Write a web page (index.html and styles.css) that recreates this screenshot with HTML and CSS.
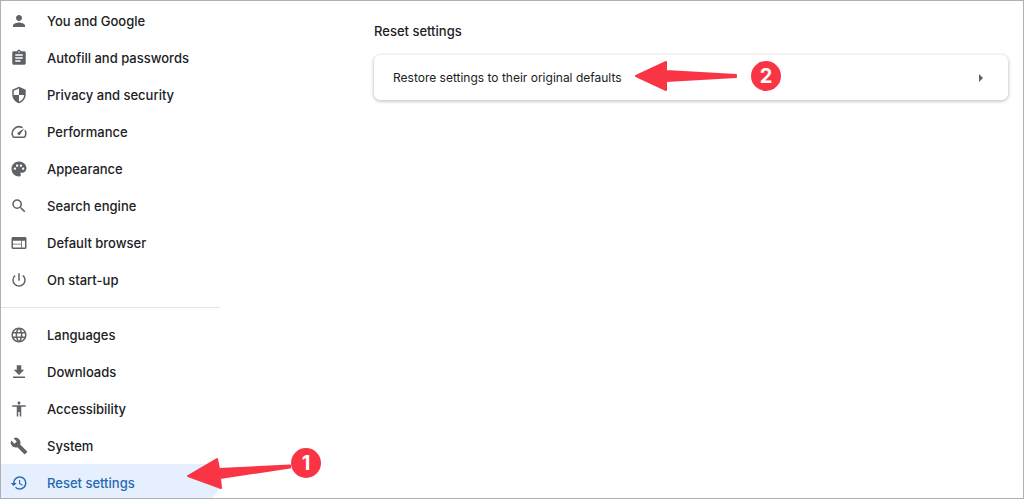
FILE: index.html
```html
<!DOCTYPE html>
<html lang="en">

<head>
    <meta charset="UTF-8" />
    <meta name="viewport" content="width=device-width, initial-scale=1.0" />
    <title>Settings</title>
    <link rel="stylesheet" href="styles.css">
</head>

<body>
    <div class="settings-container">
        <nav class="sidebar">
            <a class="menu-item" href="#people">
                <svg class="icon" viewBox="0 0 24 24"><path d="M12 12c2.21 0 4-1.79 4-4s-1.79-4-4-4-4 1.79-4 4 1.79 4 4 4zm0 2c-2.67 0-8 1.34-8 4v2h16v-2c0-2.66-5.33-4-8-4z" /></svg>
                <span>You and Google</span>
            </a>
            <a class="menu-item" href="#autofill">
                <svg class="icon" viewBox="0 0 24 24"><path d="M19 3h-4.18C14.4 1.84 13.3 1 12 1s-2.4.84-2.82 2H5c-1.1 0-2 .9-2 2v14c0 1.1.9 2 2 2h14c1.1 0 2-.9 2-2V5c0-1.1-.9-2-2-2zm-7 0c.55 0 1 .45 1 1s-.45 1-1 1-1-.45-1-1 .45-1 1-1zm2 14H7v-2h7v2zm3-4H7v-2h10v2zm0-4H7V7h10v2z" /></svg>
                <span>Autofill and passwords</span>
            </a>
            <a class="menu-item" href="#privacy">
                <svg class="icon" viewBox="0 0 24 24"><path d="M12 1L3 5v6c0 5.55 3.84 10.74 9 12 5.16-1.26 9-6.45 9-12V5l-9-4zm0 10.99h7c-.53 4.12-3.28 7.79-7 8.94V12H5V6.3l7-3.11v8.8z" /></svg>
                <span>Privacy and security</span>
            </a>
            <a class="menu-item" href="#performance">
                <svg class="icon" viewBox="0 0 24 24"><path d="M20.38 8.57l-1.23 1.85a8 8 0 0 1-.22 7.58H5.07A8 8 0 0 1 15.58 6.85l1.85-1.23A10 10 0 0 0 3.35 19a2 2 0 0 0 1.72 1h13.85a2 2 0 0 0 1.74-1 10 10 0 0 0-.27-10.44zm-9.79 6.84a2 2 0 0 0 2.83 0l5.66-8.49-8.49 5.66a2 2 0 0 0 0 2.83z" /></svg>
                <span>Performance</span>
            </a>
            <a class="menu-item" href="#appearance">
                <svg class="icon" viewBox="0 0 24 24"><path d="M12 2C6.49 2 2 6.49 2 12s4.49 10 10 10c1.38 0 2.5-1.12 2.5-2.5 0-.61-.23-1.2-.64-1.67-.08-.1-.13-.21-.13-.33 0-.28.22-.5.5-.5H16c3.31 0 6-2.69 6-6 0-4.96-4.49-9-10-9zM6.5 13c-.83 0-1.5-.67-1.5-1.5S5.67 10 6.5 10s1.5.67 1.5 1.5S7.33 13 6.5 13zm3-4C8.67 9 8 8.33 8 7.5S8.67 6 9.5 6s1.5.67 1.5 1.5S10.33 9 9.5 9zm5 0c-.83 0-1.5-.67-1.5-1.5S13.67 6 14.5 6s1.5.67 1.5 1.5S15.33 9 14.5 9zm3 4c-.83 0-1.5-.67-1.5-1.5s.67-1.5 1.5-1.5 1.5.67 1.5 1.5-.67 1.5-1.5 1.5z" /></svg>
                <span>Appearance</span>
            </a>
            <a class="menu-item" href="#search">
                <svg class="icon" viewBox="0 0 24 24"><path d="M15.5 14h-.79l-.28-.27A6.47 6.47 0 0 0 16 9.5 6.5 6.5 0 1 0 9.5 16c1.61 0 3.09-.59 4.23-1.57l.27.28v.79l5 4.99L20.49 19l-4.99-5zm-6 0C7.01 14 5 11.99 5 9.5S7.01 5 9.5 5 14 7.01 14 9.5 11.99 14 9.5 14z" /></svg>
                <span>Search engine</span>
            </a>
            <a class="menu-item" href="#defaultBrowser">
                <svg class="icon" viewBox="0 0 24 24"><path d="M20 4H4c-1.1 0-1.99.9-1.99 2L2 18c0 1.1.9 2 2 2h16c1.1 0 2-.9 2-2V6c0-1.1-.9-2-2-2zm-5 14H4v-4h11v4zm0-5H4V9h11v4zm5 5h-4V9h4v9z" /></svg>
                <span>Default browser</span>
            </a>
            <a class="menu-item" href="#onStartup">
                <svg class="icon" viewBox="0 0 24 24"><path d="M13 3h-2v10h2V3zm4.83 2.17l-1.42 1.42A6.92 6.92 0 0 1 19 12c0 3.87-3.13 7-7 7s-7-3.13-7-7c0-2.19 1.01-4.14 2.58-5.42L6.17 5.17A8.93 8.93 0 0 0 3 12a9 9 0 0 0 18 0c0-2.74-1.23-5.18-3.17-6.83z" /></svg>
                <span>On start-up</span>
            </a>

            <hr class="divider" />

            <a class="menu-item" href="#languages">
                <svg class="icon" viewBox="0 0 24 24"><path d="M11.99 2C6.47 2 2 6.48 2 12s4.47 10 9.99 10C17.52 22 22 17.52 22 12S17.52 2 11.99 2zm6.93 6h-2.95c-.32-1.25-.78-2.45-1.38-3.56 1.84.63 3.37 1.91 4.33 3.56zM12 4.04c.83 1.2 1.48 2.53 1.91 3.96h-3.82c.43-1.43 1.08-2.76 1.91-3.96zM4.26 14C4.1 13.36 4 12.69 4 12s.1-1.36.26-2h3.38c-.08.66-.14 1.32-.14 2s.06 1.34.14 2H4.26zm.82 2h2.95c.32 1.25.78 2.45 1.38 3.56-1.84-.63-3.37-1.9-4.33-3.56zm2.95-8H5.08c.96-1.66 2.49-2.93 4.33-3.56C8.81 5.55 8.35 6.75 8.03 8zM12 19.96c-.83-1.2-1.48-2.53-1.91-3.96h3.82c-.43 1.43-1.08 2.76-1.91 3.96zM14.34 14H9.66c-.09-.66-.16-1.32-.16-2s.07-1.35.16-2h4.68c.09.65.16 1.32.16 2s-.07 1.34-.16 2zm.25 5.56c.6-1.11 1.06-2.31 1.38-3.56h2.95c-.96 1.65-2.49 2.93-4.33 3.56zM16.36 14c.08-.66.14-1.32.14-2s-.06-1.34-.14-2h3.38c.16.64.26 1.31.26 2s-.1 1.36-.26 2h-3.38z" /></svg>
                <span>Languages</span>
            </a>
            <a class="menu-item" href="#downloads">
                <svg class="icon" viewBox="0 0 24 24"><path d="M19 9h-4V3H9v6H5l7 7 7-7zM4 18v2h16v-2H4z" /></svg>
                <span>Downloads</span>
            </a>
            <a class="menu-item" href="#accessibility">
                <svg class="icon" viewBox="0 0 24 24"><path d="M12 2c1.1 0 2 .9 2 2s-.9 2-2 2-2-.9-2-2 .9-2 2-2zm9 7h-6v13h-2v-6h-2v6H9V9H3V7h18v2z" /></svg>
                <span>Accessibility</span>
            </a>
            <a class="menu-item" href="#system">
                <svg class="icon" viewBox="0 0 24 24"><path d="M22.7 19l-9.1-9.1c.9-2.3.4-5-1.5-6.9-2-2-5-2.4-7.4-1.3L9 6 6 9 1.6 4.7C.4 7.1.9 10.1 2.9 12.1c1.9 1.9 4.6 2.4 6.9 1.5l9.1 9.1c.4.4 1 .4 1.4 0l2.3-2.3c.5-.4.5-1.1.1-1.4z" /></svg>
                <span>System</span>
            </a>
            <a class="menu-item selected" href="#reset">
                <svg class="icon" viewBox="0 0 24 24"><path d="M13 3a9 9 0 0 0-9 9H1l3.89 3.89.07.14L9 12H6c0-3.87 3.13-7 7-7s7 3.13 7 7-3.13 7-7 7c-1.93 0-3.68-.79-4.94-2.06l-1.42 1.42A8.95 8.95 0 0 0 13 21a9 9 0 0 0 0-18zm-1 5v5l4.28 2.54.72-1.21-3.5-2.08V8H12z" /></svg>
                <span>Reset settings</span>
            </a>
            <!-- step 1 -->
            <div class="step step-one">
                <svg class="arrow" width="106" height="42" viewBox="0 0 106 42"><path d="M3 28 32 11 34 21 105 17.500 105 19.500 35 30 36 40Z" /></svg>
                <span class="badge">1</span>
            </div>
        </nav>

        <main class="content">
            <h2>Reset settings</h2>
            <div class="card">
                <button type="button" class="card-row">
                    <span>Restore settings to their original defaults</span>
                    <svg class="chevron" width="6" height="10" viewBox="0 0 6 10"><path d="M1 1 5 5 1 9Z" /></svg>
                </button>
                <!-- step 2 -->
                <div class="step step-two">
                    <svg class="arrow" width="104" height="34" viewBox="0 0 104 34"><path d="M2 17 32 3 32 12 102 16 102 18 32 22 32 31Z" /></svg>
                    <span class="badge">2</span>
                </div>
            </div>
        </main>
    </div>
</body>

</html>
```

FILE: styles.css
```css
* {
    box-sizing: border-box;
}

body {
    margin: 0;
    background-color: #fff;
    font-family: Inter, Roboto, Arial, sans-serif;
    color: #202124;
}

.settings-container {
    display: flex;
    height: 100vh;
    border: 1px solid #b0b0b0;
    overflow: hidden;
}

.sidebar {
    position: relative;
    flex: 0 0 219px;
    padding-top: 1px;
}

.menu-item {
    display: flex;
    align-items: center;
    gap: 19px;
    height: 37px;
    padding-left: 9px;
    font-size: 13px;
    font-weight: 500;
    color: #202124;
    text-decoration: none;
    border-radius: 0 20px 20px 0;
}

.icon {
    width: 18px;
    height: 18px;
    fill: #5f6368;
}

.menu-item.selected {
    background-color: #e6effd;
    color: #2468b2;
}

.menu-item.selected .icon {
    fill: #2468b2;
}

.divider {
    height: 1px;
    margin: 9px 0 8px;
    border: none;
    background-color: #e3e3e3;
}

.content {
    flex: 1;
    padding: 20px 15px 0 154px;
}

.content h2 {
    margin: 0 0 14px;
    font-size: 13px;
    font-weight: 500;
    line-height: 20px;
}

.card {
    position: relative;
    border-radius: 7px;
    box-shadow: 0 1px 3px 1px rgba(60, 64, 67, 0.25);
}

.card-row {
    display: flex;
    align-items: center;
    justify-content: space-between;
    width: 100%;
    height: 45px;
    padding: 0 24px 0 19px;
    background-color: #fff;
    border: none;
    border-radius: 7px;
    font-family: inherit;
    font-size: 12px;
    color: #202124;
    cursor: pointer;
}

.chevron {
    fill: #5f6368;
}

/* arrows and numbers drawn over the page */
.step {
    position: absolute;
    display: flex;
    align-items: center;
    pointer-events: none;
}

.step-one {
    left: 184px;
    bottom: 8px;
}

.step-two {
    left: 260px;
    top: 4px;
    gap: 13px;
}

.arrow {
    fill: #f93545;
    stroke: #f93545;
    stroke-width: 2px;
    stroke-linejoin: round;
}

.badge {
    width: 30px;
    height: 30px;
    border-radius: 50%;
    background-color: #f93545;
    color: #fff;
    font-size: 20px;
    font-weight: 700;
    line-height: 30px;
    text-align: center;
}

.step-one .badge {
    align-self: flex-start;
}
```
